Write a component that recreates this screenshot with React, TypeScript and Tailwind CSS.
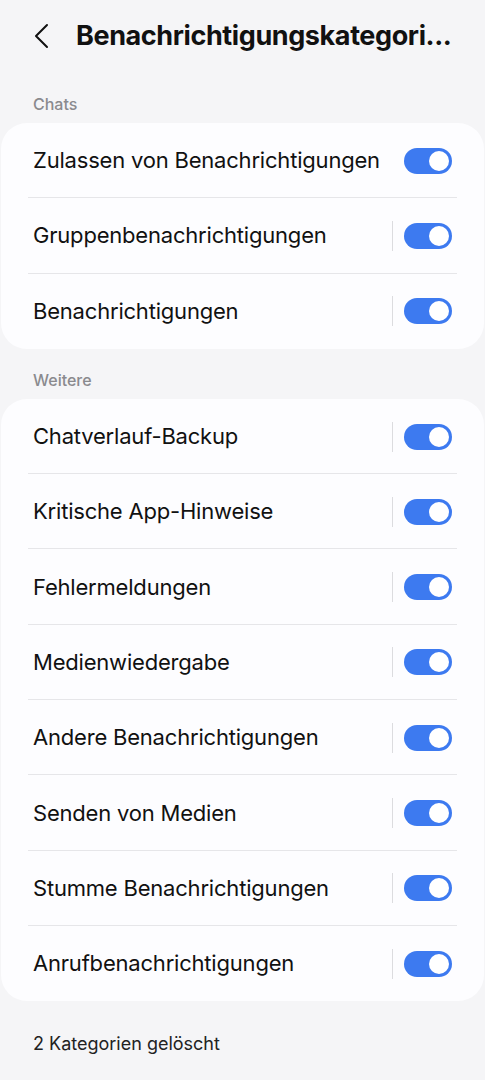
const chats = [
  { label: "Zulassen von Benachrichtigungen", sep: false },
  { label: "Gruppenbenachrichtigungen", sep: true },
  { label: "Benachrichtigungen", sep: true },
];

const weitere = [
  "Chatverlauf-Backup",
  "Kritische App-Hinweise",
  "Fehlermeldungen",
  "Medienwiedergabe",
  "Andere Benachrichtigungen",
  "Senden von Medien",
  "Stumme Benachrichtigungen",
  "Anrufbenachrichtigungen",
];

function Toggle() {
  return (
    <div className="flex h-[26px] w-[48px] items-center justify-end rounded-full bg-[#3d7af0] pr-[3px]">
      <div className="h-[20px] w-[20px] rounded-full bg-white" />
    </div>
  );
}

function Row({ label, sep, last }: { label: string; sep: boolean; last: boolean }) {
  return (
    <div className="relative flex h-[75.3px] items-center pl-[32px] pr-[32px]">
      <span className="flex-1 text-[22px] tracking-[-0.2px] text-[#111]">{label}</span>
      {sep && <div className="mr-[11px] h-[30px] w-px bg-[#dcdcdf]" />}
      <Toggle />
      {!last && <div className="absolute bottom-0 left-[27px] right-[27px] h-px bg-[#e6e6e9]" />}
    </div>
  );
}

export default function App() {
  return (
    <div
      className="min-h-[1080px] w-[485px] bg-[#f5f5f7]"
      style={{ fontFamily: "Inter, Roboto, 'Noto Sans', sans-serif" }}
    >
      {/* Kopfzeile */}
      <header className="flex h-[72px] items-center pl-[33px]">
        <svg width="16" height="26" viewBox="0 0 16 26" fill="none">
          <path d="M14 2 L3 13 L14 24" stroke="#111" strokeWidth="2" strokeLinecap="round" strokeLinejoin="round" />
        </svg>
        <h1 className="ml-[27px] text-[27px] font-bold tracking-[-0.4px] text-[#111]">
          Benachrichtigungskategori...
        </h1>
      </header>

      <div className="flex h-[51px] items-end pb-[7px] pl-[33px] text-[16px] font-medium text-[#8a8a8e]">
        Chats
      </div>
      <section className="mx-[1px] rounded-[26px] bg-[#fdfdff]">
        {chats.map((c, i) => (
          <Row key={c.label} label={c.label} sep={c.sep} last={i === chats.length - 1} />
        ))}
      </section>

      <div className="flex h-[50px] items-end pb-[7px] pl-[33px] text-[16px] font-medium text-[#8a8a8e]">
        Weitere
      </div>
      <section className="mx-[1px] rounded-[26px] bg-[#fdfdff]">
        {weitere.map((w, i) => (
          <Row key={w} label={w} sep={true} last={i === weitere.length - 1} />
        ))}
      </section>

      <p className="pl-[33px] pt-[29px] text-[18px] text-[#222]">2 Kategorien gelöscht</p>
    </div>
  );
}
